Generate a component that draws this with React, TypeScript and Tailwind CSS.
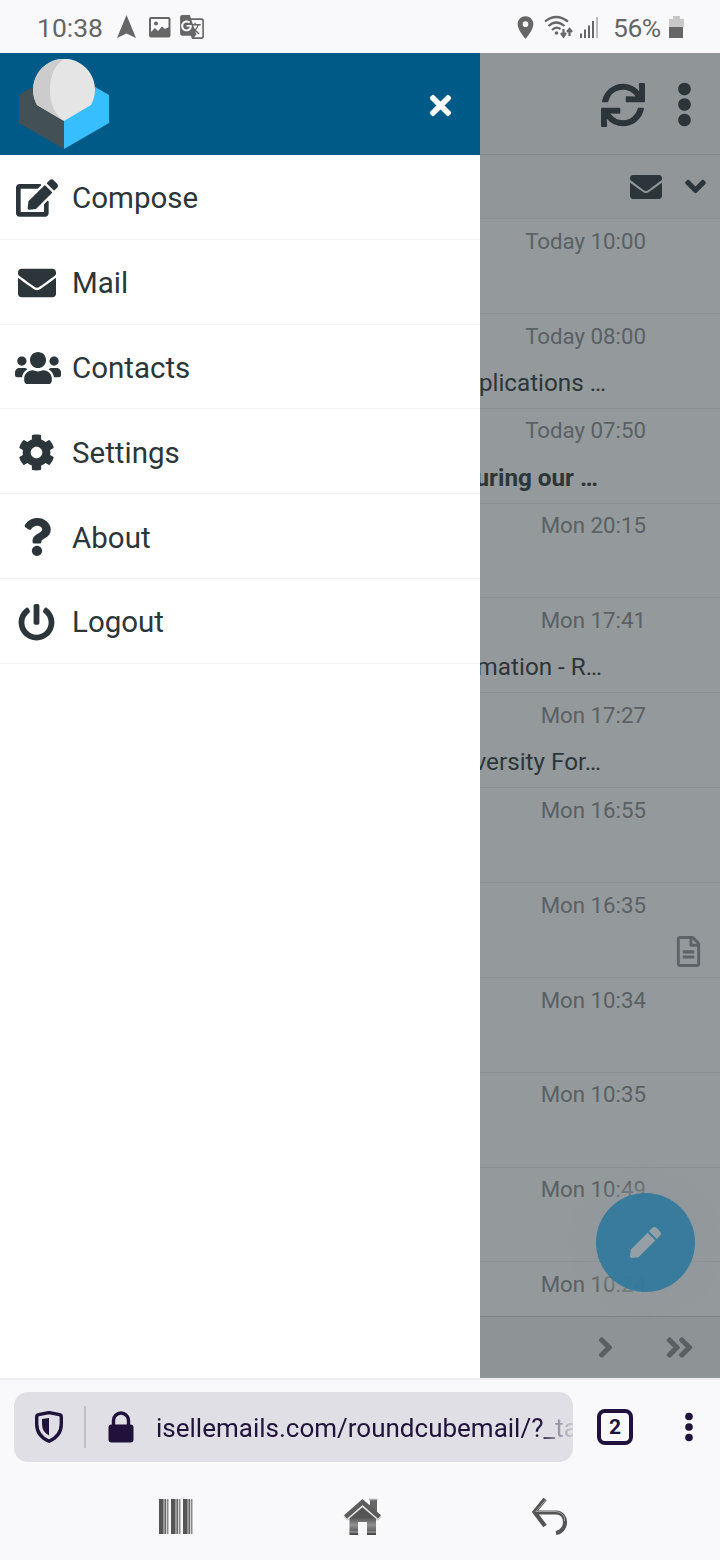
import React from "react";
import {
  FaEdit, FaEnvelope, FaUsers, FaCog, FaQuestion, FaPowerOff, FaTimes, FaSync,
  FaAngleDown, FaPen, FaAngleRight, FaAngleDoubleRight, FaRegFileAlt, FaEllipsisV,
} from "react-icons/fa";
import { MdLocationOn, MdGTranslate } from "react-icons/md";

const menu = [
  { label: "Compose", icon: <FaEdit size={42} /> },
  { label: "Mail", icon: <FaEnvelope size={38} /> },
  { label: "Contacts", icon: <FaUsers size={46} className="ml-[2px]" /> },
  { label: "Settings", icon: <FaCog size={37} className="-ml-[1px]" /> },
  { label: "About", icon: <FaQuestion size={38} /> },
  { label: "Logout", icon: <FaPowerOff size={37} className="-ml-[1px]" /> },
];

const messages: { time: string; subject?: string; unread?: boolean; file?: boolean; right?: string }[] = [
  { time: "Today 10:00" },
  { time: "Today 08:00", subject: "plications …", right: "pr-[114px]" },
  { time: "Today 07:50", subject: "uring our …", unread: true, right: "pr-[122px]" },
  { time: "Mon 20:15" },
  { time: "Mon 17:41", subject: "mation - R…", right: "pr-[118px]" },
  { time: "Mon 17:27", subject: "versity For…", right: "pr-[119px]" },
  { time: "Mon 16:55" },
  { time: "Mon 16:35", file: true },
  { time: "Mon 10:34" },
  { time: "Mon 10:35" },
  { time: "Mon 10:49" },
  { time: "Mon 10:24" },
];

function StatusBar() {
  return (
    <div className="flex h-[53px] shrink-0 items-center bg-[#f9f9fb] pl-[37px] pr-[36px] pt-[1px] text-[#666]">
      <span className="w-[66px] whitespace-nowrap pt-[2px] text-[26.500px] leading-none">10:38</span>
      <svg className="ml-[14px]" width="20" height="24" viewBox="0 0 20 24" fill="currentColor">
        <path d="M9.500 0L19 23L9.500 18.500L0 23Z" />
      </svg>
      <svg className="ml-[12px]" width="22" height="21" viewBox="0 0 22 21">
        <rect x="1" y="1" width="19.500" height="18.500" rx="1" fill="none" stroke="#666" strokeWidth="2" />
        <circle cx="7" cy="6.500" r="2" fill="#666" />
        <path d="M2 15L6 11L9 14L13 9.500L16 12L20 10V19H2Z" fill="#666" />
      </svg>
      <MdGTranslate size={26} className="ml-[8px]" />
      <MdLocationOn size={27} className="ml-auto" />
      <svg className="ml-[5px]" width="30" height="24" viewBox="0 0 30 24" fill="none" stroke="currentColor" strokeWidth="2.200">
        <path d="M1 6.500Q12 -2.500 24 6.500M4.500 11Q12 4 20.500 11M8 15Q12 11 16.500 14" />
        <circle cx="12.500" cy="18" r="1.800" fill="currentColor" stroke="none" />
        <path d="M19.500 14V21M17 18L19.500 21.500L22 18M25.500 21V14M23 17L25.500 14L28 17" />
      </svg>
      <svg className="ml-[6px]" width="20" height="21" viewBox="0 0 20 21" fill="#666">
        <path d="M0 16.500h2v4.500h-2zM4 12.500h2v8.500h-2zM8 8.500h2v12.500h-2zM12 4h2v17h-2z" />
        <path d="M16 0h2v21h-2z" fill="#bbb" />
      </svg>
      <span className="ml-[13px] w-[52px] whitespace-nowrap pt-[2px] text-[26.500px] leading-none tracking-[-0.500px]">56%</span>
      <svg className="ml-[4px]" width="15" height="22" viewBox="0 0 15 22">
        <path d="M4 0h7v3h4v8H0V3h4z" fill="#c8c8c8" />
        <path d="M0 11h14v11H0z" fill="#666" />
      </svg>
    </div>
  );
}

function Drawer() {
  return (
    <aside className="flex w-[480px] shrink-0 flex-col bg-white">
      <header className="flex h-[102px] shrink-0 items-center justify-between bg-[#005a87] pl-[19px] pr-[24px]">
        <svg width="90" height="90" viewBox="0 0 90 90">
          <path d="M0 36L45 10V90L0 64Z" fill="#435156" />
          <path d="M90 36L45 10V90L90 64Z" fill="#37beff" />
          <path d="M45 62L18 46A31 31 0 1 1 72 46Z" fill="#e5e5e5" />
          <path d="M45 62L18 46A31 31 0 0 1 45 0Q31 9 31 31Q31 52 45 62Z" fill="#ccc" />
        </svg>
        <FaTimes size={31} color="#fff" className="mt-[2px]" />
      </header>
      <nav>
        {menu.map((m) => (
          <a key={m.label} className="flex h-[84.800px] items-center border-b border-[#f1f3f4] text-[#2c363a]">
            <span className="flex w-[72px] shrink-0 justify-center pl-[2px] pt-[2.500px]">{m.icon}</span>
            <span className="pt-[3px] text-[29.500px] leading-[40px]">{m.label}</span>
          </a>
        ))}
      </nav>
    </aside>
  );
}

function MessageList() {
  return (
    <main className="relative flex min-w-0 flex-1 flex-col overflow-hidden bg-[#94999b] text-[#2c363a]">
      <header className="flex h-[102px] shrink-0 items-center justify-end border-b border-[#7f8689] bg-[#909597] pr-[24px] pt-[2px]">
        <FaSync size={44} />
        <FaEllipsisV size={45} className="-mr-[11px] ml-[17px]" />
      </header>
      <div className="flex h-[64px] shrink-0 items-center justify-end border-b border-[#8b9193] bg-[#919698] pr-[8px]">
        <FaEnvelope size={32} />
        <FaAngleDown size={33} className="ml-[17px]" />
      </div>
      <div className="min-h-0 flex-1 overflow-hidden">
        {messages.map((m) => (
          <div key={m.time} className="flex h-[94.870px] flex-col border-b border-[#8b9194]">
            <div className="flex justify-end pr-[74px] pt-[5.700px] text-[22.250px] leading-[32px] text-[#5a6063]">{m.time}</div>
            {m.subject && (
              <div className={`flex justify-end pt-[16.300px] text-[24.250px] leading-[30px] whitespace-nowrap ${m.right} ${m.unread ? "font-bold" : ""}`}>
                {m.subject}
              </div>
            )}
            {m.file && (
              <div className="flex justify-end pr-[16px] pt-[15px] text-[#5d6467]"><FaRegFileAlt size={31} /></div>
            )}
          </div>
        ))}
      </div>
      <footer className="flex h-[62px] shrink-0 items-center justify-end border-t border-[#7c8386] bg-[#8e9395] pr-[24px] text-[#596063]">
        <FaAngleRight size={33} />
        <FaAngleDoubleRight size={33} className="ml-[41px]" />
      </footer>
      <button className="absolute bottom-[86px] right-[25px] flex h-[99px] w-[99px] items-center justify-center rounded-full bg-[#357a9d]/97 text-[#94a0a5] shadow-[0_0_22px_4px_rgba(144,153,157,0.9)]">
        <FaPen size={31} />
      </button>
    </main>
  );
}

function BrowserBar() {
  return (
    <div className="flex h-[98px] shrink-0 items-center border-t-2 border-[#ededf0] bg-[#f9f9fb] pb-[2px] pl-[14px] text-[#20123a]">
      <div className="flex h-[70px] w-[559px] items-center overflow-hidden rounded-[14px] bg-[#e0dfe6] pl-[21px]">
        <svg width="28" height="32" viewBox="0 0 28 32">
          <path d="M14 1.600L24.500 3.600Q26.300 4 26.300 6V13Q26.300 25 14 30.200Q1.700 25 1.700 13V6Q1.700 4 3.500 3.600Z" fill="none" stroke="#20123a" strokeWidth="3.400" strokeLinejoin="round" />
          <path d="M14 7V24.500Q7 21 7 13V8Z" fill="#20123a" />
        </svg>
        <span className="ml-[21px] h-[42px] w-[2px] bg-[#bfbfc9]" />
        <svg width="26" height="32" viewBox="0 0 26 32" className="ml-[22px]">
          <rect x="0.500" y="13.500" width="25" height="18" rx="3" fill="#20123a" />
          <path d="M5.500 15V9.500A7.500 7.500 0 0 1 20.500 9.500V15" fill="none" stroke="#20123a" strokeWidth="3.400" />
        </svg>
        <span className="ml-[22px] min-w-0 flex-1 overflow-hidden whitespace-nowrap pt-[2px] text-[26px] leading-[40px] [mask-image:linear-gradient(to_right,#000_92%,rgba(0,0,0,0.4)_96%,rgba(0,0,0,0.1)_100%)]">isellemails.com/roundcubemail/?_ta</span>
      </div>
      <span className="ml-[24px] flex h-[36px] w-[36px] items-center justify-center rounded-[8px] border-4 border-[#20123a] text-[21px] font-bold leading-none">2</span>
      <svg width="8" height="30" viewBox="0 0 8 30" className="ml-[52px]" fill="#20123a">
        <circle cx="4" cy="4.500" r="3.800" /><circle cx="4" cy="15" r="3.800" /><circle cx="4" cy="25.500" r="3.800" />
      </svg>
    </div>
  );
}

function NavBar() {
  return (
    <div className="flex flex-1 items-start bg-[#f9f9fb] pl-[159px]">
      <svg className="mt-[23px]" width="34" height="35" viewBox="0 0 34 35">
        {[0, 12, 24].map((x) => (
          <g key={x} transform={`translate(${x} 0)`}>
            <rect width="9.400" height="35" fill="#d5d5d5" />
            <rect width="4.500" height="35" fill="#555" />
            <rect x="4.500" width="1.200" height="35" fill="#999" />
            <rect x="5.700" width="1.300" height="35" fill="#666" />
            <rect x="8" width="1.400" height="35" fill="#888" />
          </g>
        ))}
      </svg>
      <svg className="mt-[22px] ml-[150px]" width="39" height="38" viewBox="0 0 39 38">
        <defs>
          <linearGradient id="metal" x1="0" y1="0" x2="0" y2="1">
            <stop offset="0" stopColor="#555" /><stop offset="0.400" stopColor="#555" /><stop offset="0.650" stopColor="#909090" /><stop offset="1" stopColor="#444" />
          </linearGradient>
        </defs>
        <path d="M27 2h7v14l-7-7z" fill="#666" />
        <path d="M26 1.500h8.500" stroke="#aaa" strokeWidth="1.500" />
        <path d="M6.500 20L19.500 8L33 20V37H24V24H15V37H6.500Z" fill="url(#metal)" />
        <path d="M7 34h8M24 34h9" stroke="#c0c0c0" strokeWidth="0.800" />
        <path d="M2.500 20.500L19.500 6L36.500 20.500" fill="none" stroke="#999" strokeWidth="5.500" />
        <path d="M2.500 20L19.500 5.500L36.500 20" fill="none" stroke="#f0f0f0" strokeWidth="5" />
        <path d="M2.500 19L19.500 4L36.500 19" fill="none" stroke="#5c5c5c" strokeWidth="4.500" />
      </svg>
      <svg className="mt-[21px] ml-[150px]" width="36" height="39" viewBox="0 0 36 39" fill="none">
        <path d="M13 2L2.500 15L13 29M3 15.500H24C36 16 36 34 24 36" stroke="#555" strokeWidth="4.200" />
        <path d="M13.500 3L3.500 15M4 14.500H23C31 15 33 20 32.500 24" stroke="#aaa" strokeWidth="0.900" />
      </svg>
    </div>
  );
}

export default function App() {
  return (
    <div className="flex h-[1560px] w-[720px] flex-col overflow-hidden font-[Roboto,sans-serif]">
      <StatusBar />
      <div className="flex h-[1325px] shrink-0">
        <Drawer />
        <MessageList />
      </div>
      <BrowserBar />
      <NavBar />
    </div>
  );
}
